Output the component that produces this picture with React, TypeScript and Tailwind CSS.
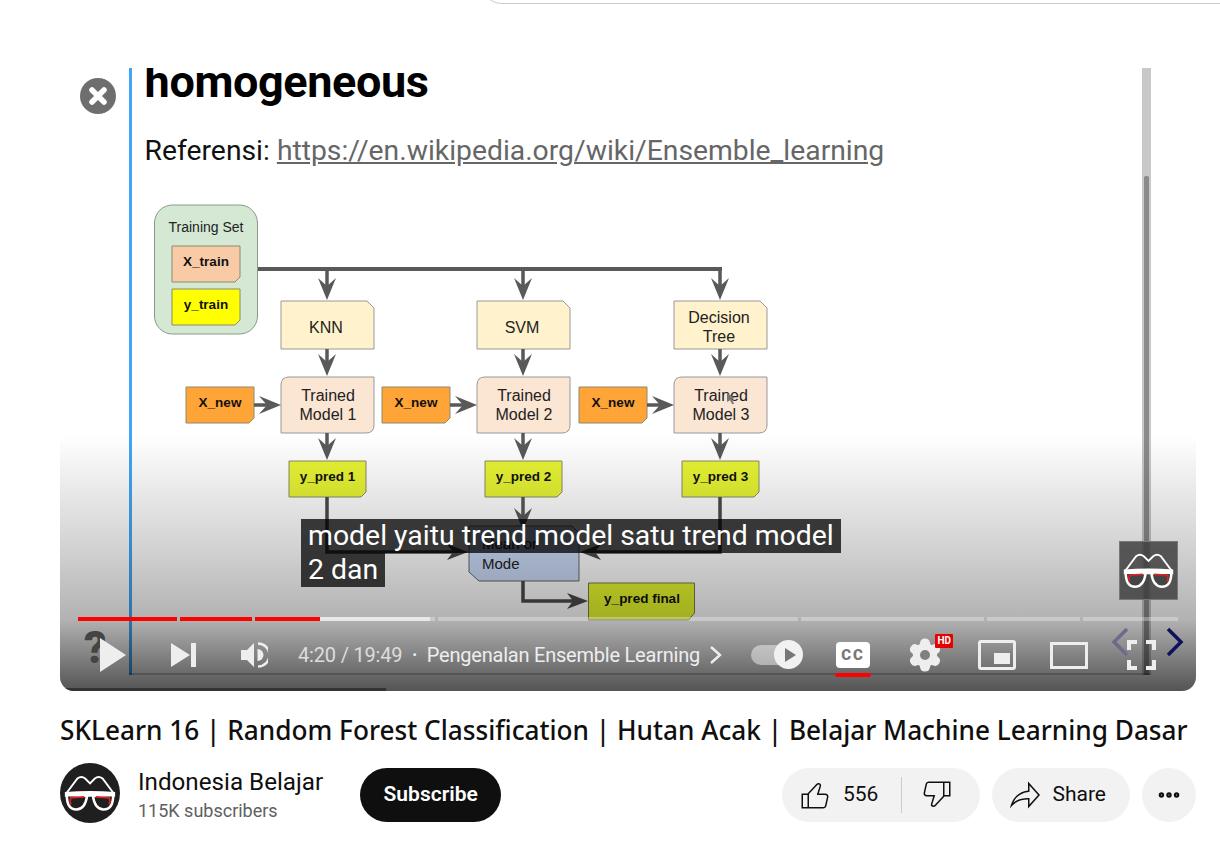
import { Settings, Ellipsis } from 'lucide-react';

const roboto = 'font-[Roboto,sans-serif]';

function Arrow({ x1, y1, x2, y2 }: { x1: number; y1: number; x2: number; y2: number }) {
  const angle = Math.atan2(y2 - y1, x2 - x1);
  const back = 22;
  const side = 9;
  const bx = x2 - Math.cos(angle) * back;
  const by = y2 - Math.sin(angle) * back;
  const nx = -Math.sin(angle) * side;
  const ny = Math.cos(angle) * side;
  const mx = x2 - Math.cos(angle) * 14;
  const my = y2 - Math.sin(angle) * 14;
  return (
    <g>
      <line x1={x1} y1={y1} x2={mx} y2={my} stroke="#595959" strokeWidth="3.5" />
      <path d={`M${x2} ${y2}L${bx + nx} ${by + ny}L${mx} ${my}L${bx - nx} ${by - ny}Z`} fill="#595959" />
    </g>
  );
}

function Note({ x, y, w, h, fill, label }: { x: number; y: number; w: number; h: number; fill: string; label: string }) {
  return (
    <g>
      <path d={`M${x} ${y}h${w}v${h - 5}l-5 5h-${w - 5}z`} fill={fill} stroke="#8a8a70" strokeWidth="1" />
      <text x={x + w / 2} y={y + h / 2 + 2} textAnchor="middle" fontSize="13.5" fontWeight="700" fill="#111">
        {label}
      </text>
    </g>
  );
}

function Algo({ x, lines }: { x: number; lines: string[] }) {
  return (
    <g>
      <path d={`M${x} 301h86l7 7v41h-93z`} fill="#fff2cc" stroke="#999" strokeWidth="1" />
      {lines.map((line, i) => (
        <text key={line} x={x + 45} y={lines.length === 1 ? 333 : 323 + i * 19} textAnchor="middle" fontSize="16" fill="#222">
          {line}
        </text>
      ))}
    </g>
  );
}

function Model({ x, n }: { x: number; n: number }) {
  return (
    <g>
      <path d={`M${x + 8} 377h85v48q0 8-8 8h-${85}v-48q0-8 8-8z`} fill="#fbe5d3" stroke="#999" strokeWidth="1" />
      <text x={x + 47} y="401" textAnchor="middle" fontSize="16" fill="#222">Trained</text>
      <text x={x + 47} y="420" textAnchor="middle" fontSize="16" fill="#222">Model {n}</text>
    </g>
  );
}

function Diagram() {
  const columns = [
    { x: 281, mid: 327, algo: ['KNN'], n: 1 },
    { x: 477, mid: 523, algo: ['SVM'], n: 2 },
    { x: 674, mid: 720, algo: ['Decision', 'Tree'], n: 3 },
  ];
  return (
    <svg width="1136" height="623" viewBox="60 68 1136 623" className="absolute left-0 top-0 font-[Liberation_Sans,sans-serif]">
      <line x1="257" y1="269" x2="722" y2="269" stroke="#595959" strokeWidth="4" />
      <rect x="154.5" y="205" width="103" height="129" rx="18" fill="#d5e8d4" stroke="#8a9a8a" strokeWidth="1" />
      <text x="206" y="232" textAnchor="middle" fontSize="14" fill="#222">Training Set</text>
      <Note x={172} y={246} w={68} h={36} fill="#f8cba6" label="X_train" />
      <Note x={172} y={289} w={68} h={36} fill="#ffff00" label="y_train" />
      {columns.map((c) => (
        <g key={c.n}>
          <Arrow x1={c.mid} y1={269} x2={c.mid} y2={300} />
          <Algo x={c.x} lines={c.algo} />
          <Arrow x1={c.mid} y1={349} x2={c.mid} y2={376} />
          <Model x={c.x} n={c.n} />
          <Note x={c.x - 95} y={387} w={68} h={36} fill="#ffa436" label="X_new" />
          <Arrow x1={c.x - 27} y1={405} x2={c.x} y2={405} />
          <Arrow x1={c.mid} y1={433} x2={c.mid} y2={460} />
          <Note x={c.x + 8} y={461} w={77} h={36} fill="#e8f533" label={`y_pred ${c.n}`} />
        </g>
      ))}
      <path d="M327 497V552H455" fill="none" stroke="#4a4a4a" strokeWidth="3.5" />
      <path d="M468 552L447 544L453 552L447 560Z" fill="#4a4a4a" />
      <Arrow x1={523} y1={497} x2={523} y2={530} />
      <path d="M720 497V552H592" fill="none" stroke="#4a4a4a" strokeWidth="3.5" />
      <path d="M580 552L601 544L595 552L601 560Z" fill="#4a4a4a" />
      <path d="M469 526h103l7 7v48h-100l-10-9z" fill="#cbdcf9" stroke="#666" strokeWidth="1" />
      <text x="482" y="549" fontSize="15" fill="#222">Mean or</text>
      <text x="482" y="569" fontSize="15" fill="#222">Mode</text>
      <path d="M523 581V601H575" fill="none" stroke="#4a4a4a" strokeWidth="3.5" />
      <path d="M588 601L567 593L573 601L567 609Z" fill="#4a4a4a" />
      <path d="M588.5 583h106v30l-6 7h-100z" fill="#e8fa2e" stroke="#7a7a50" strokeWidth="1" />
      <text x="642" y="603" textAnchor="middle" fontSize="13.5" fontWeight="700" fill="#111">y_pred final</text>
      <path d="M727 393l8 5-3 1 2 5-2 0-2-4-3 2z" fill="#777" />
    </svg>
  );
}

function Glasses({ size, bg }: { size: number; bg: string }) {
  return (
    <svg width={size} height={size} viewBox="0 0 60 60">
      <path d="M5 31L17 15Q21 12 25 15L30 20L35 15Q39 12 43 15L55 31" fill="none" stroke="#fff" strokeWidth="2" />
      <path d="M4 29Q30 27 56 29L56 34H4Z" fill="#fff" />
      <path d="M6 32Q6 47 16 47Q25 47 27 33Z" fill={bg} stroke="#fff" strokeWidth="2.6" />
      <path d="M54 32Q54 47 44 47Q35 47 33 33Z" fill={bg} stroke="#fff" strokeWidth="2.6" />
      <path d="M10 42Q9 38 10 35L24 34" fill="none" stroke="#e02020" strokeWidth="1.8" />
      <path d="M50 42Q51 38 50 35L36 34" fill="none" stroke="#e02020" strokeWidth="1.8" />
    </svg>
  );
}

function ThumbIcon({ className }: { className?: string }) {
  return (
    <svg width="36" height="36" viewBox="0 0 24 24" fill="#0f0f0f" className={className}>
      <path d="M18.77 11h-4.23l1.52-4.94C16.38 5.03 15.54 4 14.38 4c-.58 0-1.14.24-1.52.65L7 11H3v10h14.43c1.06 0 1.98-.67 2.19-1.61l1.34-6C21.23 12.15 20.18 11 18.77 11zM7 20H4v-8h3v8zm12.98-6.83-1.34 6c-.1.48-.61.83-1.21.83H8v-8.61l5.6-6.06c.19-.21.48-.33.78-.33.26 0 .5.11.63.3.07.1.15.26.09.47l-1.52 4.94-.4 1.29h5.58c.41 0 .8.17 1.03.46.11.17.24.41.17.71z" />
    </svg>
  );
}

function PlayerBar() {
  const chapters = [
    { w: 99, fill: 99 },
    { w: 72, fill: 72 },
    { w: 180, fill: 65, buffered: 175 },
    { w: 361, fill: 0 },
    { w: 183, fill: 0 },
    { w: 93, fill: 0 },
    { w: 95, fill: 0 },
  ];
  return (
    <div className="absolute inset-x-0 bottom-0 flex flex-col px-[18px] pb-[18px]">
      <div className="mb-[-2px] flex h-[4px] gap-[3px]">
        {chapters.map((c, i) => (
          <div key={i} className="relative h-full bg-white/30" style={{ width: c.w }}>
            {c.buffered ? <div className="absolute inset-y-0 left-0 bg-white/60" style={{ width: c.buffered }} /> : null}
            <div className="absolute inset-y-0 left-0 bg-[#ff0000]" style={{ width: c.fill }} />
          </div>
        ))}
      </div>
      <div className={`mt-[18px] flex h-[36px] items-center text-[#eee] ${roboto}`}>
        <svg width="26" height="36" viewBox="0 0 26 36" className="ml-[22px] shrink-0"><path d="M0 1L26 18L0 35Z" fill="#eee" /></svg>
        <svg width="26" height="26" viewBox="0 0 26 26" className="ml-[44px] shrink-0"><path d="M1 1L20 13L1 25Z" fill="#eee" /><rect x="21" y="1" width="5" height="24" fill="#eee" /></svg>
        <svg width="28" height="30" viewBox="0 0 28 30" className="ml-[44px] shrink-0">
          <path d="M1 10h6l7-7v24l-7-7H1z" fill="#eee" />
          <path d="M17.5 9a6 6 0 0 1 0 12z" fill="#eee" />
          <path d="M18 3.5a11.5 11.5 0 0 1 0 23" fill="none" stroke="#eee" strokeWidth="2.5" />
        </svg>
        <span className="ml-[30px] whitespace-nowrap text-[20px] tracking-[-0.18px] text-[#ddd]">4:20 / 19:49</span>
        <span className="ml-[10px] text-[13px]">•</span>
        <span className="ml-[10px] whitespace-nowrap text-[20px] tracking-[-0.22px]">Pengenalan Ensemble Learning</span>
        <svg width="14" height="20" viewBox="0 0 14 20" className="ml-[9px] shrink-0"><path d="M2 2L11 10L2 18" fill="none" stroke="#eee" strokeWidth="2.4" /></svg>
        <div className="relative ml-[28px] h-[20px] w-[52px] shrink-0">
          <span className="absolute left-0 top-0 h-[20px] w-[38px] rounded-full bg-white/45" />
          <span className="absolute right-0 top-[-5px] flex h-[29px] w-[29px] items-center justify-center rounded-full bg-[#f1f1f1]">
            <span className="ml-[3px] h-0 w-0 border-y-[7px] border-l-[11px] border-y-transparent border-l-[#777]" />
          </span>
        </div>
        <div className="relative ml-[33px] flex h-[26px] w-[34px] shrink-0 items-center justify-center rounded-[4px] bg-white text-[15px] font-black tracking-[2px] text-[#777]">
          CC
          <span className="absolute bottom-[-9px] left-[-1px] h-[4px] w-[36px] rounded-full bg-[#ff0000]" />
        </div>
        <div className="relative ml-[37px] shrink-0">
          <Settings size={36} fill="#eee" stroke="#eee" strokeWidth={2} />
          <span className="absolute left-[13px] top-[13px] h-[10px] w-[10px] rounded-full bg-[#808080]" />
          <span className="absolute right-[-10px] top-[-3px] rounded-[1px] bg-[#e60000] px-[2px] text-[10px] font-bold leading-[14px] text-white">HD</span>
        </div>
        <div className="relative ml-[35px] h-[30px] w-[38px] shrink-0 rounded-[3px] border-[3px] border-[#eee]">
          <span className="absolute bottom-[3px] right-[3px] h-[11px] w-[16px] bg-[#eee]" />
        </div>
        <div className="ml-[34px] h-[27px] w-[38px] shrink-0 border-[3px] border-[#eee]" />
        <div className="relative ml-[39px] h-[30px] w-[29px] shrink-0">
          <span className="absolute left-0 top-0 h-[10px] w-[10px] border-l-[4px] border-t-[4px] border-[#eee]" />
          <span className="absolute right-0 top-0 h-[10px] w-[10px] border-r-[4px] border-t-[4px] border-[#eee]" />
          <span className="absolute bottom-0 left-0 h-[10px] w-[10px] border-b-[4px] border-l-[4px] border-[#eee]" />
          <span className="absolute bottom-0 right-0 h-[10px] w-[10px] border-b-[4px] border-r-[4px] border-[#eee]" />
        </div>
      </div>
    </div>
  );
}

function VideoPlayer() {
  return (
    <div className={`relative h-[623px] w-[1136px] overflow-hidden rounded-b-[14px] bg-white ${roboto}`}>
      <Diagram />
      {/* overlays baked into the video */}
      <div className="absolute left-[20px] top-[10px] flex h-[36px] w-[36px] items-center justify-center rounded-full bg-[#6e6e6e]">
        <svg width="20" height="20" viewBox="0 0 20 20"><path d="M4 4L16 16M16 4L4 16" stroke="#fff" strokeWidth="5.5" strokeLinecap="round" /></svg>
      </div>
      <div className="absolute left-[69px] top-0 h-[607px] w-[3px] bg-[#42a5f5]" />
      <div className="absolute left-[1082px] top-0 h-[607px] w-[9px] bg-[#c8c8c8]">
        <div className="absolute left-[2px] top-[108px] h-[499px] w-[5px] rounded-t-[2px] bg-[#8a8a8a]" />
      </div>
      <h2 className="absolute left-[84.6px] top-[-16px] text-[45px] font-bold leading-[60px] tracking-[-0.4px] text-black">homogeneous</h2>
      <p className="absolute left-[84.6px] top-[67px] whitespace-nowrap text-[28.3px] leading-[32px] text-[#111]">
        Referensi: <span className="text-[#666] underline">https://en.wikipedia.org/wiki/Ensemble_learning</span>
      </p>

      <div className="absolute inset-x-0 bottom-0 h-[256px] bg-[linear-gradient(to_bottom,rgba(0,0,0,0)_0%,rgba(0,0,0,0.18)_45%,rgba(0,0,0,0.3)_72%,rgba(0,0,0,0.5)_87%,rgba(0,0,0,0.67)_100%)]" />
      <div className="absolute left-[69px] top-[605px] h-[2px] w-[1022px] bg-black/20" />

      <div className="absolute left-[241px] top-[451px] flex flex-col items-start text-[28.4px] leading-[34px] text-white">
        <span className="whitespace-nowrap bg-black/75 px-[7px]">model yaitu trend model satu trend model</span>
        <span className="whitespace-nowrap bg-black/75 px-[7px]">2 dan</span>
      </div>

      <div className="absolute left-[1059px] top-[473px] flex h-[59px] w-[59px] items-center justify-center border border-[#777] bg-[#3f3f3f]/85">
        <Glasses size={57} bg="#444" />
      </div>

      <span className="absolute left-[24px] top-[558px] text-[44px] font-black leading-none text-[#444]">?</span>
      <PlayerBar />

      <svg width="18" height="30" viewBox="0 0 18 30" className="absolute left-[1051px] top-[559px]"><path d="M16 2L3 15L16 28" fill="none" stroke="#6b6b8e" strokeWidth="3.5" /></svg>
      <svg width="18" height="30" viewBox="0 0 18 30" className="absolute left-[1106px] top-[559px]"><path d="M2 2L15 15L2 28" fill="none" stroke="#10105c" strokeWidth="3.5" /></svg>
      <div className="absolute bottom-0 left-0 h-[3px] w-[326px] bg-[#333]" />
    </div>
  );
}

function ActionBar() {
  return (
    <div className="flex items-center gap-3 text-[#0f0f0f]">
      <div className="flex h-[54px] items-center rounded-full bg-[#f2f2f2] pl-[14.5px] pr-[25.5px]">
        <ThumbIcon />
        <span className={`ml-[10px] w-[35px] text-[21px] ${roboto}`}>556</span>
        <span className="ml-[23px] h-[36px] w-px bg-[#ccc]" />
        <ThumbIcon className="ml-[17px] rotate-180" />
      </div>
      <div className="flex h-[54px] items-center rounded-full bg-[#f2f2f2] pl-[15px] pr-[24px]">
        <svg width="36" height="36" viewBox="0 0 24 24" fill="#0f0f0f">
          <path d="M15 5.63 20.66 12 15 18.37V14h-1c-3.96 0-7.14 1-9.75 3.09 1.84-4.07 5.11-6.4 9.89-7.1l.86-.13V5.63M14 3v6C6.22 10.13 3.11 15.33 2 21c2.78-3.97 6.44-6 12-6v6l8-9-8-9z" />
        </svg>
        <span className={`ml-[9px] text-[21px] ${roboto}`}>Share</span>
      </div>
      <div className="flex h-[54px] w-[54px] items-center justify-center rounded-full bg-[#f2f2f2]">
        <Ellipsis size={26} strokeWidth={3} />
      </div>
    </div>
  );
}

export default function App() {
  return (
    <div className="relative h-[843px] w-[1220px] overflow-hidden bg-white pl-[60px] pt-[68px]">
      <div className="absolute left-[480px] top-[-40px] h-[44px] w-[800px] rounded-[22px] border border-[#ccc]" />
      <VideoPlayer />
      <h1 className="mt-[21px] whitespace-nowrap font-['Noto_Sans',sans-serif] text-[26.2px] font-medium leading-[36px] text-[#0f0f0f]">
        SKLearn 16 | Random Forest Classification | Hutan Acak | Belajar Machine Learning Dasar
      </h1>
      <div className="mt-[15px] flex w-[1136px] items-start justify-between">
        <div className="flex items-start">
          <div className="flex h-[60px] w-[60px] items-center justify-center rounded-full bg-[#1f1f1f]">
            <Glasses size={58} bg="#1f1f1f" />
          </div>
          <div className={`ml-[18px] mt-[5px] ${roboto}`}>
            <p className="text-[24.2px] leading-[28px] text-[#0f0f0f]">Indonesia Belajar</p>
            <p className="text-[18px] leading-[30px] text-[#606060]">115K subscribers</p>
          </div>
          <button type="button" className={`ml-[37px] mt-[5px] h-[54px] w-[141px] rounded-full bg-[#0f0f0f] text-[21px] font-semibold text-white ${roboto}`}>
            Subscribe
          </button>
        </div>
        <div className="mt-[5px]">
          <ActionBar />
        </div>
      </div>
    </div>
  );
}
